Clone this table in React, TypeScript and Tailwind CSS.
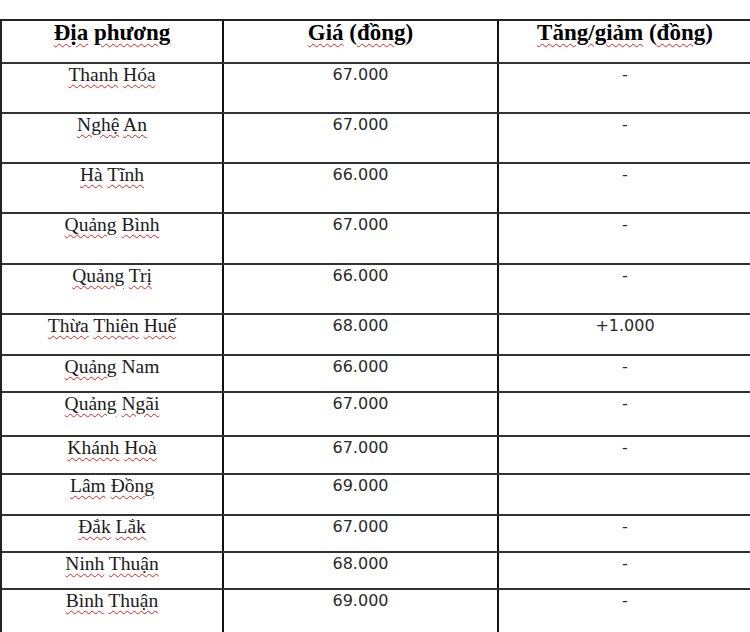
const rows = [
  { name: "Thanh Hóa", price: "67.000", change: "-", h: "h-[50px]" },
  { name: "Nghệ An", price: "67.000", change: "-", h: "h-[50px]" },
  { name: "Hà Tĩnh", price: "66.000", change: "-", h: "h-[50px]" },
  { name: "Quảng Bình", price: "67.000", change: "-", h: "h-[51px]" },
  { name: "Quảng Trị", price: "66.000", change: "-", h: "h-[50px]" },
  { name: "Thừa Thiên Huế", price: "68.000", change: "+1.000", h: "h-[41px]" },
  { name: "Quảng Nam", price: "66.000", change: "-", h: "h-[37px]" },
  { name: "Quảng Ngãi", price: "67.000", change: "-", h: "h-[44px]" },
  { name: "Khánh Hoà", price: "67.000", change: "-", h: "h-[38px]" },
  { name: "Lâm Đồng", price: "69.000", change: "", h: "h-[41px]" },
  { name: "Đắk Lắk", price: "67.000", change: "-", h: "h-[37px]" },
  { name: "Ninh Thuận", price: "68.000", change: "-", h: "h-[37px]" },
  { name: "Bình Thuận", price: "69.000", change: "-", h: "h-[60px]" },
];

// words that Word's spell checker does not flag
const clean = ["Nam"];

function Squiggly({ text }: { text: string }) {
  const words = text.split(" ");
  return (
    <>
      {words.map((w, i) => (
        <span key={i}>
          {i > 0 && " "}
          <span
            className={
              clean.includes(w)
                ? ""
                : "underline decoration-wavy decoration-[#e02020] decoration-1 underline-offset-[3px]"
            }
          >
            {w}
          </span>
        </span>
      ))}
    </>
  );
}

export default function App() {
  return (
    <div className="w-[750px] h-[632px] overflow-hidden bg-white">
      <div className="mt-[19px] w-[760px] border-t-2 border-l-2 border-[#222]">
        {/* Header */}
        <div className="flex h-[43px] border-b-2 border-[#333] font-['Liberation_Serif',serif] text-[23px] leading-[24px] font-bold text-black">
          <div className="w-[222px] border-r-2 border-[#111] text-center">
            <Squiggly text="Địa phương" />
          </div>
          <div className="w-[275px] border-r-2 border-[#111] text-center">
            <Squiggly text="Giá" /> (<Squiggly text="đồng" />)
          </div>
          <div className="w-[252px] text-center">
            <Squiggly text="Tăng/giảm" /> (<Squiggly text="đồng" />)
          </div>
        </div>

        {rows.map((r) => (
          <div key={r.name} className={`flex ${r.h} border-b-2 border-[#333]`}>
            <div className="w-[222px] border-r-2 border-[#111] text-center font-['Liberation_Serif',serif] text-[19.5px] leading-[22px] text-[#1a1a1a]">
              <Squiggly text={r.name} />
            </div>
            <div className="w-[275px] border-r-2 border-[#111] text-center font-['DejaVu_Sans',sans-serif] text-[16px] leading-[22px] text-[#2a2a2a]">
              {r.price}
            </div>
            <div className="w-[252px] text-center font-['DejaVu_Sans',sans-serif] text-[16px] leading-[22px] text-[#2a2a2a]">
              {r.change}
            </div>
          </div>
        ))}
      </div>
    </div>
  );
}
